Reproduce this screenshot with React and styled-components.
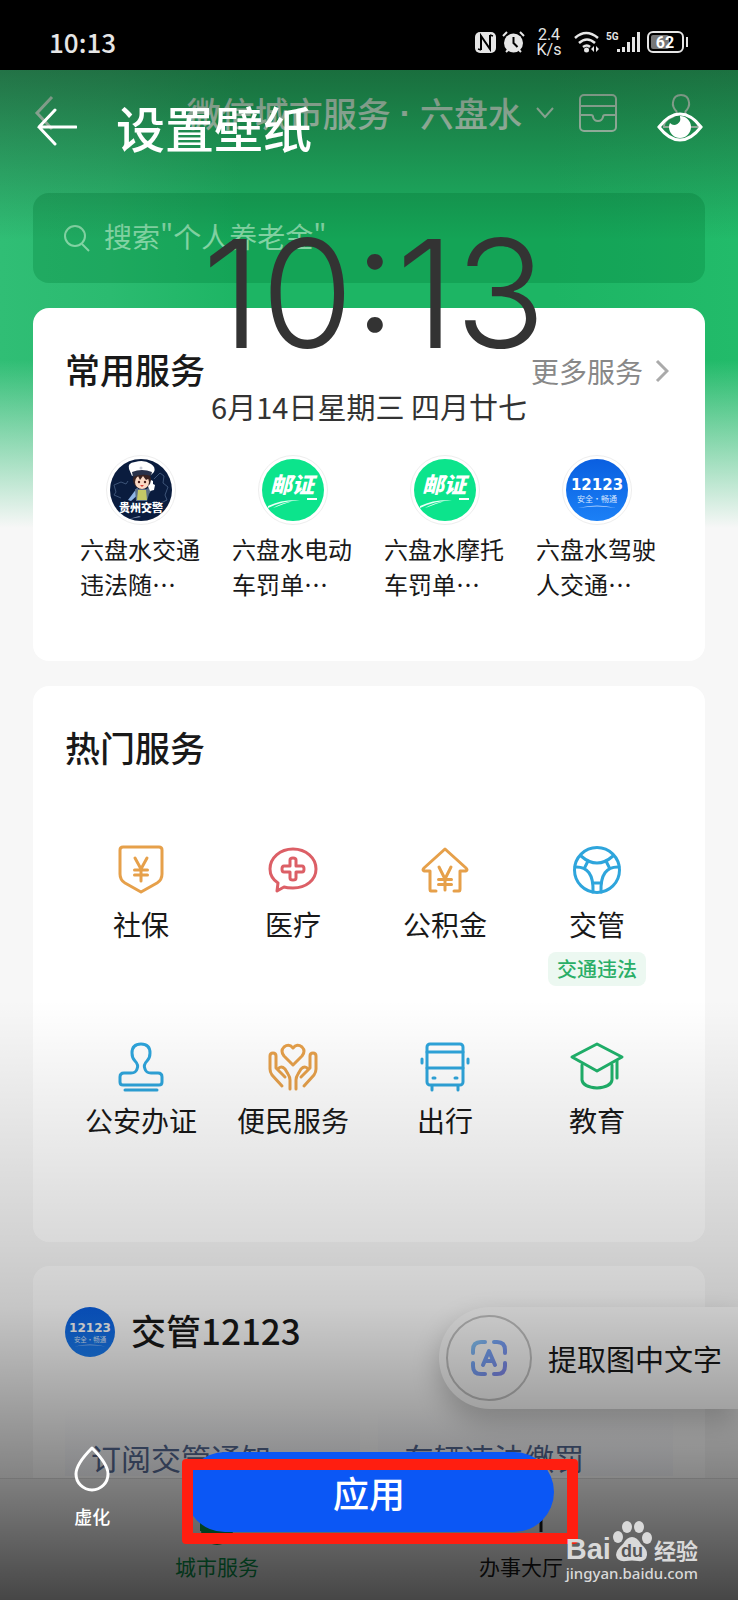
import React from "react";
import styled, { createGlobalStyle, css } from "styled-components";

const GlobalStyle = createGlobalStyle`
  * {
    box-sizing: border-box;
  }
  body {
    margin: 0;
    background: #000;
    font-family: "Noto Sans CJK SC", "Noto Sans", sans-serif;
    color: #191919;
  }
  button, input {
    font: inherit;
    color: inherit;
    background: none;
    border: 0;
    padding: 0;
    margin: 0;
  }
  a {
    color: inherit;
    text-decoration: none;
  }
  svg {
    display: block;
    flex: none;
  }
`;

const Screen = styled.div`
  display: flex;
  flex-direction: column;
  min-height: 100vh;
`;

/* ---- status bar ---- */

const StatusBar = styled.header`
  display: flex;
  align-items: center;
  justify-content: space-between;
  height: 70px;
  padding: 14px 49px 0 49px;
  background: #000;
  color: #e6e6e6;
`;

const StatusTime = styled.time`
  font-size: 26px;
  font-weight: 500;
  line-height: 32px;
`;

const StatusIcons = styled.div`
  display: flex;
  align-items: center;
  gap: 6px;
`;

const NetSpeed = styled.span`
  display: flex;
  flex-direction: column;
  align-items: center;
  width: 28px;
  margin: 0 5px 0 4px;
  font-family: Roboto, sans-serif;
  font-size: 16px;
  line-height: 15px;
`;

/* ---- wallpaper ---- */

const Stage = styled.div`
  position: relative;
  flex: 1;
  display: flex;
  flex-direction: column;
  overflow: hidden;
`;

const Wallpaper = styled.div`
  flex: 1;
  display: flex;
  flex-direction: column;
  background: linear-gradient(
      180deg,
      rgba(247, 247, 247, 0) 290px,
      rgba(247, 247, 247, 0.5) 375px,
      #f7f7f7 458px
    ),
    linear-gradient(90deg, #30be75 0, #2bbb70 110px, #1db564 240px, #1db564 75%, #22bb6a 100%);
`;

const PageHead = styled.div`
  display: flex;
  align-items: center;
  height: 86px;
  padding: 0 37px 0 33px;
  color: #c8e8d4;
`;

const CityButton = styled.button`
  display: flex;
  align-items: center;
  margin-left: auto;
  font-size: 34px;
  font-weight: 500;
  line-height: 48px;
  svg {
    margin-left: 14px;
  }
`;

const CityDot = styled.span`
  margin: 0 9px;
  font-family: "Liberation Sans", sans-serif;
  font-weight: 700;
`;

const HeadIcon = styled.button`
  margin-left: ${(p) => p.$gap || 0}px;
`;

const SearchBox = styled.label`
  display: flex;
  align-items: center;
  gap: 12px;
  height: 90px;
  margin: 37px 33px 0;
  padding: 0 30px;
  border-radius: 16px;
  background: rgba(0, 125, 55, 0.3);
  color: #82d3a3;
  input {
    flex: 1;
    min-width: 0;
    padding-bottom: 4px;
    font-size: 28px;
    line-height: 40px;
    outline: none;
  }
  input::placeholder {
    color: #82d3a3;
    opacity: 1;
  }
`;

const Card = styled.section`
  margin: ${(p) => p.$top}px 33px 0;
  padding: 39px 32px ${(p) => p.$bottom}px;
  border-radius: 16px;
  background: #fff;
`;

const CardHead = styled.div`
  display: flex;
  align-items: center;
  justify-content: space-between;
  height: 48px;
`;

const CardTitle = styled.h2`
  margin: 0;
  padding-bottom: 4px;
  font-size: 35px;
  font-weight: 500;
  line-height: 48px;
`;

const MoreLink = styled.a`
  display: flex;
  align-items: center;
  gap: 12px;
  padding-right: 4px;
  font-size: 28px;
  line-height: 40px;
  color: #888;
`;

const Grid = styled.div`
  display: grid;
  grid-template-columns: repeat(4, 1fr);
  row-gap: 55px;
  padding-top: ${(p) => p.$top}px;
`;

const AppItem = styled.a`
  display: flex;
  flex-direction: column;
  align-items: center;
  gap: 6px;
`;

const AppRing = styled.span`
  display: grid;
  place-items: center;
  width: 70px;
  height: 70px;
  border: 1px solid #eee;
  border-radius: 50%;
`;

const AppName = styled.span`
  width: 122px;
  font-size: 24px;
  line-height: 35px;
`;

const ServiceItem = styled.a`
  display: flex;
  flex-direction: column;
  align-items: center;
`;

const ServiceName = styled.span`
  margin-top: 9px;
  font-size: 28px;
  line-height: 40px;
`;

const Badge = styled.span`
  margin-top: 8px;
  padding: 0 9px;
  border-radius: 8px;
  background: #ecf8f1;
  color: #2aae67;
  font-size: 20px;
  font-weight: 500;
  line-height: 34px;
`;

const TrafficCard = styled.section`
  flex: 1;
  display: flex;
  flex-direction: column;
  margin: 24px 33px 0;
  padding: 41px 32px 0;
  border-radius: 16px 16px 0 0;
  background: #fff;
`;

const TrafficHead = styled.div`
  display: flex;
  align-items: center;
  gap: 16px;
  height: 50px;
`;

const TrafficLinks = styled.div`
  flex: 1;
  display: grid;
  grid-template-columns: 1fr 1fr;
  gap: 18px;
  margin-top: 48px;
`;

const TrafficLink = styled.a`
  height: 71px;
  padding: 36px 26px 0;
  border-radius: 12px 12px 0 0;
  background: linear-gradient(180deg, #fff, #f8f9fd);
  color: #576b95;
  font-size: 30px;
  line-height: 32px;
  white-space: nowrap;
`;

const TabBar = styled.nav`
  display: grid;
  grid-template-columns: 1fr 1fr;
  height: 122px;
  padding: 11px 65px 0;
  background: #f1f1f1;
  border-top: 1px solid #dcdcdc;
`;

const Tab = styled.a`
  display: flex;
  flex-direction: column;
  align-items: center;
  gap: 4px;
  font-size: 21px;
  line-height: 32px;
  color: ${(p) => (p.$active ? "#07974c" : "#191919")};
`;

const ExtractButton = styled.button`
  position: absolute;
  top: 1237px;
  right: 0;
  display: flex;
  align-items: center;
  gap: 16px;
  height: 102px;
  padding: 0 16px 0 7px;
  border-radius: 51px 0 0 51px;
  background: #fdfdfd;
  box-shadow: 0 12px 28px rgba(0, 0, 0, 0.22);
  font-size: 29px;
  line-height: 40px;
  white-space: nowrap;
`;

const ExtractIcon = styled.span`
  display: grid;
  place-items: center;
  width: 86px;
  height: 86px;
  border: 2px solid #c4c4c4;
  border-radius: 50%;
`;

/* ---- lock screen editor, lies over the wallpaper ---- */

const Editor = styled.div`
  position: absolute;
  inset: 0;
  display: flex;
  flex-direction: column;
  color: #fff;
  background: linear-gradient(180deg, rgba(22, 40, 24, 0.5) 0, rgba(22, 40, 24, 0) 170px),
    linear-gradient(
      0deg,
      rgba(0, 0, 0, 0.71) 0,
      rgba(0, 0, 0, 0.47) 122px,
      rgba(0, 0, 0, 0.36) 191px,
      rgba(0, 0, 0, 0.2) 293px,
      rgba(0, 0, 0, 0.15) 357px,
      rgba(0, 0, 0, 0.09) 450px,
      rgba(0, 0, 0, 0) 600px
    );
`;

const EditorHead = styled.div`
  display: flex;
  align-items: center;
  height: 114px;
  padding: 0 35px;
`;

const EditorTitle = styled.h1`
  flex: 1;
  margin: 0 0 0 39px;
  font-size: 49px;
  font-weight: 500;
  line-height: 72px;
`;

const Clock = styled.div`
  display: flex;
  flex-direction: column;
  align-items: center;
  margin-top: 54px;
  color: #333;
`;

const ClockTime = styled.time`
  padding-left: 10px;
  font-family: Inter, Roboto, sans-serif;
  font-size: 150px;
  font-weight: 300;
  line-height: 112px;
`;

const ClockDate = styled.span`
  margin-top: 36px;
  font-size: 29px;
  line-height: 40px;
`;

const EditorFoot = styled.div`
  display: grid;
  grid-template-columns: 1fr 2fr 1fr;
  align-items: start;
  margin-top: auto;
  height: 154px;
`;

const BlurButton = styled.button`
  display: flex;
  flex-direction: column;
  align-items: center;
  gap: 9px;
  font-size: 18px;
  font-weight: 500;
  line-height: 30px;
`;

const ApplyButton = styled.button`
  position: relative;
  height: 80px;
  margin-top: 6px;
  border-radius: 40px;
  background: #0b57f5;
  font-size: 36px;
  font-weight: 500;
  line-height: 50px;
  &::after {
    content: "";
    position: absolute;
    inset: 7px -24px -12px -3px;
    border: 11px solid #ff1e10;
    border-radius: 4px;
  }
`;

const Watermark = styled.div`
  position: absolute;
  right: 40px;
  bottom: 16px;
  display: flex;
  flex-direction: column;
  color: #d9d9d9;
`;

const WatermarkLogo = styled.div`
  display: flex;
  align-items: flex-end;
  justify-content: space-between;
  height: 44px;
`;

const WatermarkWord = styled.span`
  font-family: ${(p) => (p.$cn ? '"Noto Sans CJK SC"' : '"Liberation Sans"')}, sans-serif;
  font-size: ${(p) => (p.$cn ? 22 : 29)}px;
  font-weight: 700;
  line-height: 26px;
`;

const WatermarkUrl = styled.span`
  font-family: "Noto Sans", sans-serif;
  font-size: 15px;
  font-weight: 500;
  line-height: 22px;
`;

/* ---- icons ---- */

const ICON_COLORS = {
  orange: "#e6a04a",
  red: "#dc5f66",
  blue: "#2ea5dc",
  green: "#20b26b",
};

const LineIcon = styled.svg`
  width: 50px;
  height: 50px;
  overflow: visible;
  fill: none;
  stroke-width: 3;
  stroke-linecap: round;
  stroke-linejoin: round;
  ${(p) => css`
    stroke: ${ICON_COLORS[p.$color]};
  `}
`;

const icons = {
  shield: (
    <>
      <path d="M7 2h36q3 0 3 3v24q0 6-5 9L25 47 9 38q-5-3-5-9V5q0-3 3-3z" />
      <path d="M19 13l6 11 6-11M25 24v12M18.500 25h13M18.500 30h13" />
    </>
  ),
  medical: (
    <>
      <path d="M10 38C4 34 2 29 2 24 2 13 12 4 25 4s23 9 23 20-10 19-23 19q-6 0-9-1l-7 4 1-8z" />
      <path d="M22 15q0-2 3-2t3 2v6h6q2 0 2 3t-2 3h-6v6q0 2-3 2t-3-2v-6h-6q-2 0-2-3t2-3h6z" />
    </>
  ),
  house: (
    <>
      <path d="M16 46h-5q-1 0-1-2V26H4q-2-1 0-3L25 4l21 19q2 2 0 3h-6v18q0 2-1 2h-5" />
      <path d="M19 22l6 12 6-12M25 34v11M18.500 34.500h13M18.500 39.500h13" />
    </>
  ),
  wheel: (
    <>
      <circle cx="25" cy="25" r="22.500" />
      <path d="M9 11q16 14 32 0" />
      <path d="M3 22q19-1 18 25M47 22q-19-1-18 25" />
      <path d="M16 16l-3 6M34 16l3 6M21 38h8" />
    </>
  ),
  stamp: (
    <>
      <path d="M21 28q2-4-2-8-3-3-3-8 0-9 9-9t9 9q0 5-3 8-4 4-2 8 1 4 6 4h7q4 0 4 4v5q0 3-3 3H7q-3 0-3-3v-5q0-4 4-4h7q5 0 6-4z" />
      <path d="M9 49h32" />
    </>
  ),
  hands: (
    <>
      <path d="M25 24L16 15q-4-5 0-9 5-4 9 1 4-5 9-1 4 4 0 9z" />
      <path d="M14 45L4 34q-2-3-2-6V15q0-3 3-3t3 3v12l9 9M10 28q3-4 7 0l3 5q2 3 2 6v9M36 45l10-11q2-3 2-6V15q0-3-3-3t-3 3v12l-9 9M40 28q-3-4-7 0l-3 5q-2 3-2 6v9" />
    </>
  ),
  bus: (
    <>
      <rect x="7" y="3" width="36" height="41" rx="3" />
      <path d="M7 11h36M7 27h36M13 37h2M35 37h2M12 45v4M38 45v4" />
      <path d="M2 18v4M48 18v4" />
    </>
  ),
  cap: (
    <>
      <path d="M25 3L50 16 25 30 0 16z" />
      <path d="M10 24v15q1 7 15 8 14-1 15-8V24M45 20v17" />
    </>
  ),
};

function Logo12123({ size = 62 }) {
  return (
    <svg width={size} height={size} viewBox="0 0 62 62" role="img" aria-label="12123">
      <defs>
        <linearGradient id={"blue" + size} x1="0" y1="0" x2="0" y2="1">
          <stop offset="0" stopColor="#0a5fe0" />
          <stop offset="1" stopColor="#1b80f6" />
        </linearGradient>
      </defs>
      <circle cx="31" cy="31" r="31" fill={`url(#blue${size})`} />
      <text x="31" y="31" textAnchor="middle" fill="#fff" fontFamily="DejaVu Sans" fontWeight="700" fontSize="15">
        12123
      </text>
      <text x="31" y="43" textAnchor="middle" fill="#d5e6ff" fontSize="8">
        安全·畅通
      </text>
      <path d="M12 49q19-5 38 0-19-3-38 0z" fill="#a8cdff" />
    </svg>
  );
}

function LogoYouzheng() {
  return (
    <svg width="62" height="62" viewBox="0 0 62 62">
      <circle cx="31" cy="31" r="31" fill="#0ce48c" />
      <text x="30" y="34" textAnchor="middle" fill="#fff" fontWeight="900" fontStyle="italic" fontSize="22">
        邮证
      </text>
      <path d="M6 47q14-7 32-6Q20 42 6 49zM11 49q8-5 20-7-10 3-17 6z" fill="#eafff6" />
      <path d="M45 40h10" stroke="#fff" strokeWidth="2" />
    </svg>
  );
}

function LogoPolice() {
  return (
    <svg width="62" height="62" viewBox="0 0 62 62">
      <circle cx="31" cy="31" r="31" fill="#0a1c3e" />
      <path d="M4 26l7-3 5 2 2-3M4 26l2 7-2 3 7 3M44 20l6-6 4 3-1 7 5 4-3 8 2 5-6 3" fill="none" stroke="#3d5478" />
      <path d="M27 29l-9 12 3 1 10-9z" fill="#8fb5e6" />
      <path d="M25 30h12l3-4 3 3-4 6-2 7H26z" fill="#5c6f86" />
      <path d="M28 31h8l1 10H27z" fill="#c5c866" />
      <ellipse cx="32" cy="21" rx="9" ry="9" fill="#3a2320" />
      <ellipse cx="32" cy="23" rx="7" ry="7" fill="#fbd9c4" />
      <path d="M24 19l4-2 2 4 3-4 3 4 4-2-1-4H25z" fill="#3a2320" />
      <circle cx="29" cy="23" r="1.200" fill="#4a1d18" />
      <circle cx="35" cy="23" r="1.200" fill="#4a1d18" />
      <path d="M30 26h4l-2 2z" fill="#d8433c" />
      <path d="M19 10Q17 4 25 3q9-3 16 2 5 3 3 8l-3 3q-9-3-19 1z" fill="#fff" />
      <path d="M22 13q10-4 20 0l-1 4q-9-3-18 1z" fill="#29324a" />
      <circle cx="31" cy="9" r="1.500" fill="#c9cdd8" />
      <path d="M38 27l2-2 1-4 2 1v3l2 1-1 5-4 1z" fill="#fff" />
      <text x="31" y="53" textAnchor="middle" fill="#fff" fontWeight="900" fontSize="11">
        贵州交警
      </text>
      <path d="M19 60l10-3 2 1z" fill="#7b8cab" />
    </svg>
  );
}

function StatusGlyphs() {
  return (
    <>
      <svg width="21" height="21" viewBox="0 0 21 21">
        <rect width="21" height="21" rx="5" fill="#e6e6e6" />
        <path d="M6 18V4l9 13V3" fill="none" stroke="#000" strokeWidth="2" />
        <path d="M3 17l3 1M15 3l3 1" stroke="#000" strokeWidth="1.500" />
      </svg>
      <svg width="23" height="22" viewBox="0 0 23 22">
        <circle cx="11.500" cy="12" r="9.500" fill="#e6e6e6" />
        <path d="M1 5l4-4M22 5l-4-4M4 21l2-2M19 21l-2-2" stroke="#e6e6e6" strokeWidth="2" />
        <path d="M11.500 6v6l4 4" fill="none" stroke="#000" strokeWidth="2" />
      </svg>
      <NetSpeed>
        <span>2.4</span>
        <span>K/s</span>
      </NetSpeed>
      <svg width="26" height="22" viewBox="0 0 26 22">
        <path d="M1 7q11-10 23 0M5 12q8-7 16 0M9 16q4-3 7 0" fill="none" stroke="#e6e6e6" strokeWidth="2.500" />
        <circle cx="12.500" cy="19" r="2.500" fill="#e6e6e6" />
        <path d="M20 15v6l-3-3zM22 15v6l3-3z" fill="#e6e6e6" />
      </svg>
      <svg width="35" height="22" viewBox="0 0 35 22">
        <text x="0" y="9" fill="#e6e6e6" fontFamily="Roboto" fontWeight="700" fontSize="10">
          5G
        </text>
        <path d="M12.500 18v3M17.500 16v5M22.500 11v10M27.500 6v15M32.500 1v20" stroke="#e6e6e6" strokeWidth="3" />
      </svg>
      <svg width="42" height="22" viewBox="0 0 42 22">
        <rect x="1" y="1" width="35" height="20" rx="5" fill="none" stroke="#e6e6e6" strokeWidth="2" />
        <rect x="4" y="4" width="18" height="14" rx="2" fill="#777" />
        <path d="M40 6v10" stroke="#e6e6e6" strokeWidth="2" />
        <text x="18" y="16.500" textAnchor="middle" fill="#fff" fontFamily="Roboto" fontWeight="700" fontSize="16">
          62
        </text>
      </svg>
    </>
  );
}

const commonApps = [
  { name: "六盘水交通违法随…", logo: <LogoPolice /> },
  { name: "六盘水电动车罚单…", logo: <LogoYouzheng /> },
  { name: "六盘水摩托车罚单…", logo: <LogoYouzheng /> },
  { name: "六盘水驾驶人交通…", logo: <Logo12123 /> },
];

const hotServices = [
  { name: "社保", icon: "shield", color: "orange" },
  { name: "医疗", icon: "medical", color: "red" },
  { name: "公积金", icon: "house", color: "orange" },
  { name: "交管", icon: "wheel", color: "blue", badge: "交通违法" },
  { name: "公安办证", icon: "stamp", color: "blue" },
  { name: "便民服务", icon: "hands", color: "orange" },
  { name: "出行", icon: "bus", color: "blue" },
  { name: "教育", icon: "cap", color: "green" },
];

function CityPage() {
  return (
    <Wallpaper>
      <PageHead>
        <HeadIcon aria-label="返回上一页">
          <svg width="22" height="36" viewBox="0 0 22 36" fill="none" stroke="currentColor" strokeWidth="3">
            <path d="M19 2L4 18l15 16" />
          </svg>
        </HeadIcon>
        <CityButton>
          微信城市服务<CityDot>·</CityDot>六盘水
          <svg width="18" height="12" viewBox="0 0 18 12" fill="none" stroke="currentColor" strokeWidth="2">
            <path d="M1 1l8 9 8-9" />
          </svg>
        </CityButton>
        <HeadIcon $gap={25} aria-label="卡包">
          <svg width="38" height="38" viewBox="0 0 38 38" fill="none" stroke="currentColor" strokeWidth="2">
            <rect x="1" y="1" width="36" height="36" rx="4" />
            <path d="M1 12h36M1 21h11q2 0 2 2 1 4 5 4t5-4q0-2 2-2h11" />
          </svg>
        </HeadIcon>
        <HeadIcon $gap={44} aria-label="我的">
          <svg width="40" height="38" viewBox="0 0 40 38" fill="none" stroke="currentColor" strokeWidth="2">
            <path d="M16 18q-5-5-4-10 1-7 8-7t8 7q1 5-4 10M16 18q-1 4-7 6-6 3-6 8v1h34v-1q0-5-6-8-6-2-7-6" />
          </svg>
        </HeadIcon>
      </PageHead>
      <SearchBox>
        <svg width="29" height="29" viewBox="0 0 29 29" fill="none" stroke="currentColor" strokeWidth="2">
          <circle cx="12" cy="12" r="10" />
          <path d="M19 20l7 7" />
        </svg>
        <input type="text" aria-label="搜索" placeholder={'搜索"个人养老金"'} />
      </SearchBox>

      <Card $top={25} $bottom={60}>
        <CardHead>
          <CardTitle>常用服务</CardTitle>
          <MoreLink href="#more">
            更多服务
            <svg width="14" height="24" viewBox="0 0 14 24" fill="none" stroke="#aaa" strokeWidth="3">
              <path d="M2 2l10 10L2 22" />
            </svg>
          </MoreLink>
        </CardHead>
        <Grid $top={60}>
          {commonApps.map((app) => (
            <AppItem href="#app" key={app.name}>
              <AppRing>{app.logo}</AppRing>
              <AppName>{app.name}</AppName>
            </AppItem>
          ))}
        </Grid>
      </Card>

      <Card $top={25} $bottom={102}>
        <CardHead>
          <CardTitle>热门服务</CardTitle>
        </CardHead>
        <Grid $top={72}>
          {hotServices.map((s) => (
            <ServiceItem href="#service" key={s.name}>
              <LineIcon viewBox="0 0 50 50" $color={s.color}>
                {icons[s.icon]}
              </LineIcon>
              <ServiceName>{s.name}</ServiceName>
              {s.badge && <Badge>{s.badge}</Badge>}
            </ServiceItem>
          ))}
        </Grid>
      </Card>

      <TrafficCard>
        <TrafficHead>
          <Logo12123 size={50} />
          <CardTitle>交管12123</CardTitle>
        </TrafficHead>
        <TrafficLinks>
          <TrafficLink href="#notice">订阅交管通知</TrafficLink>
          <TrafficLink href="#fine">车辆违法缴罚</TrafficLink>
        </TrafficLinks>
      </TrafficCard>

      <TabBar>
        <Tab $active href="#city">
          <svg width="52" height="56" viewBox="0 0 52 56" fill="none" stroke="currentColor" strokeWidth="2">
            <path d="M10 12v29" />
            <ellipse cx="26" cy="40" rx="16" ry="15" fill="currentColor" stroke="none" />
          </svg>
          城市服务
        </Tab>
        <Tab href="#hall">
          <svg width="52" height="56" viewBox="0 0 52 56" fill="none" stroke="currentColor" strokeWidth="3">
            <path d="M8 40V12h38v30" />
          </svg>
          办事大厅
        </Tab>
      </TabBar>

      <ExtractButton>
        <ExtractIcon>
          <svg width="36" height="36" viewBox="0 0 36 36" fill="none" strokeWidth="4" strokeLinecap="round">
            <defs>
              <linearGradient id="scan" gradientUnits="userSpaceOnUse" x1="0" y1="0" x2="36" y2="36">
                <stop offset="0" stopColor="#8ccdf8" />
                <stop offset="0.400" stopColor="#78a6fa" />
                <stop offset="1" stopColor="#8488ee" />
              </linearGradient>
            </defs>
            <g stroke="url(#scan)" strokeLinejoin="round">
              <path d="M2 13v-3q0-8 8-8h4M23 2h3q8 0 8 8v3M34 23v3q0 8-8 8h-3M14 34h-4q-8 0-8-8v-3" />
              <path d="M12 25l6-14 6 14M15 21h6" />
            </g>
          </svg>
        </ExtractIcon>
        提取图中文字
      </ExtractButton>
    </Wallpaper>
  );
}

function WallpaperEditor() {
  return (
    <Editor>
      <EditorHead>
        <button aria-label="返回">
          <svg width="42" height="40" viewBox="0 0 42 40" fill="none" stroke="#fff" strokeWidth="3" strokeLinecap="round">
            <path d="M20 3L4 20l16 17M4 20h37" />
          </svg>
        </button>
        <EditorTitle>设置壁纸</EditorTitle>
        <button aria-label="预览">
          <svg width="46" height="30" viewBox="0 0 46 30">
            <path d="M2 15Q12 2 23 2t21 13Q34 28 23 28T2 15z" fill="none" stroke="#fff" strokeWidth="3" />
            <path d="M23 4a11 11 0 1 1-11 11q0-2 1-4a6 6 0 0 0 10-6z" fill="#fff" />
          </svg>
        </button>
      </EditorHead>
      <Clock>
        <ClockTime>10:13</ClockTime>
        <ClockDate>6月14日星期三 四月廿七</ClockDate>
      </Clock>
      <EditorFoot>
        <BlurButton>
          <svg width="38" height="46" viewBox="0 0 38 46" fill="none" stroke="#fff" strokeWidth="3">
            <path d="M19 2q16 16 16 26a16 16 0 0 1-32 0Q3 18 19 2z" strokeLinejoin="round" />
          </svg>
          虚化
        </BlurButton>
        <ApplyButton>应用</ApplyButton>
      </EditorFoot>
    </Editor>
  );
}

function BaiduMark() {
  return (
    <Watermark>
      <WatermarkLogo>
        <WatermarkWord>Bai</WatermarkWord>
        <svg width="40" height="42" viewBox="0 0 40 42" fill="currentColor">
          <ellipse cx="6" cy="17" rx="5" ry="6" />
          <ellipse cx="15" cy="7" rx="5" ry="6" />
          <ellipse cx="27" cy="7" rx="5" ry="6" />
          <ellipse cx="35" cy="18" rx="5" ry="6" />
          <path d="M20 17q5 0 9 7 7 6 6 11-1 7-9 6-6-1-12 0-9 1-10-6 0-5 7-11 4-7 9-7z" />
          <text x="20" y="37" textAnchor="middle" fill="#555" fontFamily="Liberation Sans" fontWeight="700" fontSize="18">
            du
          </text>
        </svg>
        <WatermarkWord $cn>经验</WatermarkWord>
      </WatermarkLogo>
      <WatermarkUrl>jingyan.baidu.com</WatermarkUrl>
    </Watermark>
  );
}

export default function App() {
  return (
    <Screen lang="zh-CN">
      <GlobalStyle />
      <StatusBar>
        <StatusTime>10:13</StatusTime>
        <StatusIcons>
          <StatusGlyphs />
        </StatusIcons>
      </StatusBar>
      <Stage>
        <CityPage />
        <WallpaperEditor />
        <BaiduMark />
      </Stage>
    </Screen>
  );
}
